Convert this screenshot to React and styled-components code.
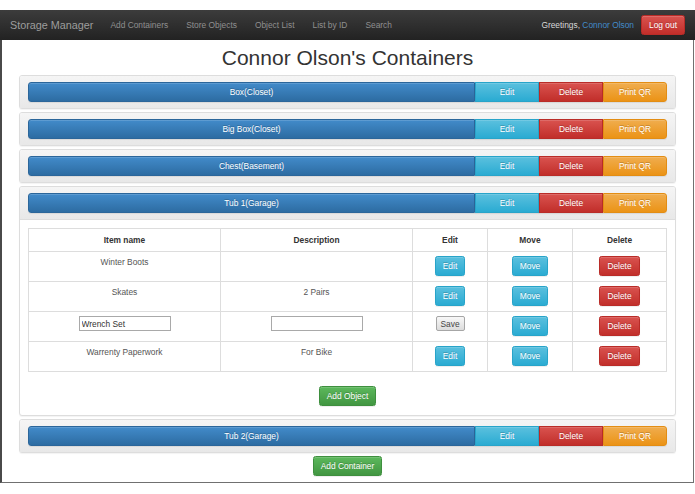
import React from "react";
import styled, { createGlobalStyle, css } from "styled-components";

const GlobalStyle = createGlobalStyle`
  body {
    margin: 0;
    background: #fff;
    font-family: "Liberation Sans", Arial, sans-serif;
    font-size: 8.4px;
    color: #333;
  }
`;

const gradients = {
  primary: ["#428bca", "#2d6ca2", "#2b669a"],
  info: ["#5bc0de", "#2aabd2", "#28a4c9"],
  danger: ["#d9534f", "#c12e2a", "#b92c28"],
  warning: ["#f0ad4e", "#eb9316", "#e38d13"],
  success: ["#5cb85c", "#419641", "#3e8f3e"],
};

const Page = styled.div`
  padding-top: 10px;
`;

const Navbar = styled.nav`
  height: 30px;
  display: flex;
  align-items: center;
  padding-right: 10px;
  background: linear-gradient(to bottom, #3c3c3c 0%, #222 100%);
`;

const Brand = styled.a`
  font-size: 10.8px;
  color: #9d9d9d;
  padding: 0 8px 0 10px;
  text-decoration: none;
`;

const NavLink = styled.a`
  color: #8f8f8f;
  padding: 0 9px;
  text-decoration: none;
`;

const NavRight = styled.div`
  margin-left: auto;
  display: flex;
  align-items: center;
  gap: 7px;
  color: #d8d8d8;
`;

const UserName = styled.span`
  color: #428bca;
`;

const Btn = styled.button`
  display: inline-block;
  vertical-align: top;
  font-family: inherit;
  font-size: 8.4px;
  height: 20px;
  padding: 0 7px;
  color: #fff;
  border: 1px solid ${(p) => gradients[p.$kind][2]};
  border-radius: 2.5px;
  text-shadow: 0 -1px 0 rgba(0, 0, 0, 0.2);
  box-shadow: inset 0 1px 0 rgba(255, 255, 255, 0.15), 0 1px 1px rgba(0, 0, 0, 0.075);
  background: linear-gradient(
    to bottom,
    ${(p) => gradients[p.$kind][0]} 0%,
    ${(p) => gradients[p.$kind][1]} 100%
  );
  cursor: pointer;
`;

const Frame = styled.div`
  box-sizing: border-box;
  width: 694px;
  padding: 0 17px 6px 17px;
  border: 1px solid #707070;
  border-left: 2px solid #4a4a4a;
  border-top: none;
`;

const Title = styled.h1`
  margin: 0;
  padding: 5px 0 4px;
  font-size: 21px;
  line-height: 26px;
  font-weight: 400;
  text-align: center;
  color: #333;
`;

const Panel = styled.div`
  background: #fff;
  border: 1px solid #ddd;
  border-radius: 3px;
  margin-bottom: 3px;
  box-shadow: 0 1px 1px rgba(0, 0, 0, 0.05);
`;

const PanelHeading = styled.div`
  padding: 6px 8px;
  border-radius: 2px 2px 0 0;
  background: linear-gradient(to bottom, #f5f5f5 0%, #e8e8e8 100%);
  ${(p) =>
    p.$open &&
    css`
      border-bottom: 1px solid #ddd;
    `}
`;

const BarGroup = styled.div`
  display: flex;
`;

const BarButton = styled(Btn)`
  width: 64px;
  border-radius: 0;
  &:last-child {
    border-radius: 0 3px 3px 0;
  }
`;

const NameButton = styled(BarButton)`
  flex: 1;
  border-radius: 3px 0 0 3px;
`;

const PanelBody = styled.div`
  padding: 8px 8px 9px;
  text-align: center;
`;

const Table = styled.table`
  width: 100%;
  border-collapse: collapse;
  margin-bottom: 14px;
  th,
  td {
    border: 1px solid #ddd;
    line-height: 12px;
    text-align: center;
    vertical-align: top;
  }
  th {
    padding: 5px;
    font-weight: bold;
    color: #333;
  }
  td {
    height: 20px;
    padding: 4px 5px 5px;
    color: #555;
  }
`;

const TextInput = styled.input`
  box-sizing: border-box;
  width: 92px;
  height: 15px;
  padding: 0 2px;
  font-family: inherit;
  font-size: 8.4px;
  color: #333;
  border: 1px solid #a9a9a9;
  border-radius: 0;
  outline: none;
  vertical-align: top;
`;

const SaveButton = styled.button`
  height: 15px;
  width: 29px;
  padding: 0;
  font-family: inherit;
  font-size: 8.4px;
  color: #444;
  border: 1px solid #a6a6a6;
  border-radius: 2px;
  vertical-align: top;
  background: linear-gradient(to bottom, #f8f8f8 0%, #dcdcdc 100%);
`;

const Footer = styled.div`
  text-align: center;
`;

const containers = [
  { name: "Box(Closet)" },
  { name: "Big Box(Closet)" },
  { name: "Chest(Basement)" },
  {
    name: "Tub 1(Garage)",
    open: true,
    items: [
      { name: "Winter Boots", desc: "" },
      { name: "Skates", desc: "2 Pairs" },
      { name: "Wrench Set", desc: "", editing: true },
      { name: "Warrenty Paperwork", desc: "For Bike" },
    ],
  },
  { name: "Tub 2(Garage)" },
];

const ItemRow = ({ item }) => (
  <tr>
    <td>{item.editing ? <TextInput defaultValue={item.name} /> : item.name}</td>
    <td>{item.editing ? <TextInput defaultValue={item.desc} /> : item.desc}</td>
    <td>
      {item.editing ? <SaveButton>Save</SaveButton> : <Btn $kind="info">Edit</Btn>}
    </td>
    <td>
      <Btn $kind="info">Move</Btn>
    </td>
    <td>
      <Btn $kind="danger">Delete</Btn>
    </td>
  </tr>
);

const ContainerPanel = ({ container }) => (
  <Panel>
    <PanelHeading $open={container.open}>
      <BarGroup>
        <NameButton $kind="primary">{container.name}</NameButton>
        <BarButton $kind="info">Edit</BarButton>
        <BarButton $kind="danger">Delete</BarButton>
        <BarButton $kind="warning">Print QR</BarButton>
      </BarGroup>
    </PanelHeading>
    {container.open && (
      <PanelBody>
        <Table>
          <thead>
            <tr>
              <th style={{ width: 181 }}>Item name</th>
              <th style={{ width: 181 }}>Description</th>
              <th style={{ width: 64 }}>Edit</th>
              <th style={{ width: 74 }}>Move</th>
              <th>Delete</th>
            </tr>
          </thead>
          <tbody>
            {container.items.map((item) => (
              <ItemRow key={item.name} item={item} />
            ))}
          </tbody>
        </Table>
        <Btn $kind="success">Add Object</Btn>
      </PanelBody>
    )}
  </Panel>
);

export default function App() {
  return (
    <Page>
      <GlobalStyle />
      <Navbar>
        <Brand>Storage Manager</Brand>
        <NavLink>Add Containers</NavLink>
        <NavLink>Store Objects</NavLink>
        <NavLink>Object List</NavLink>
        <NavLink>List by ID</NavLink>
        <NavLink>Search</NavLink>
        <NavRight>
          <span>
            Greetings, <UserName>Connor Olson</UserName>
          </span>
          <Btn $kind="danger">Log out</Btn>
        </NavRight>
      </Navbar>
      <Frame>
        <Title>Connor Olson's Containers</Title>
        {containers.map((c) => (
          <ContainerPanel key={c.name} container={c} />
        ))}
        <Footer>
          <Btn $kind="success">Add Container</Btn>
        </Footer>
      </Frame>
    </Page>
  );
}
